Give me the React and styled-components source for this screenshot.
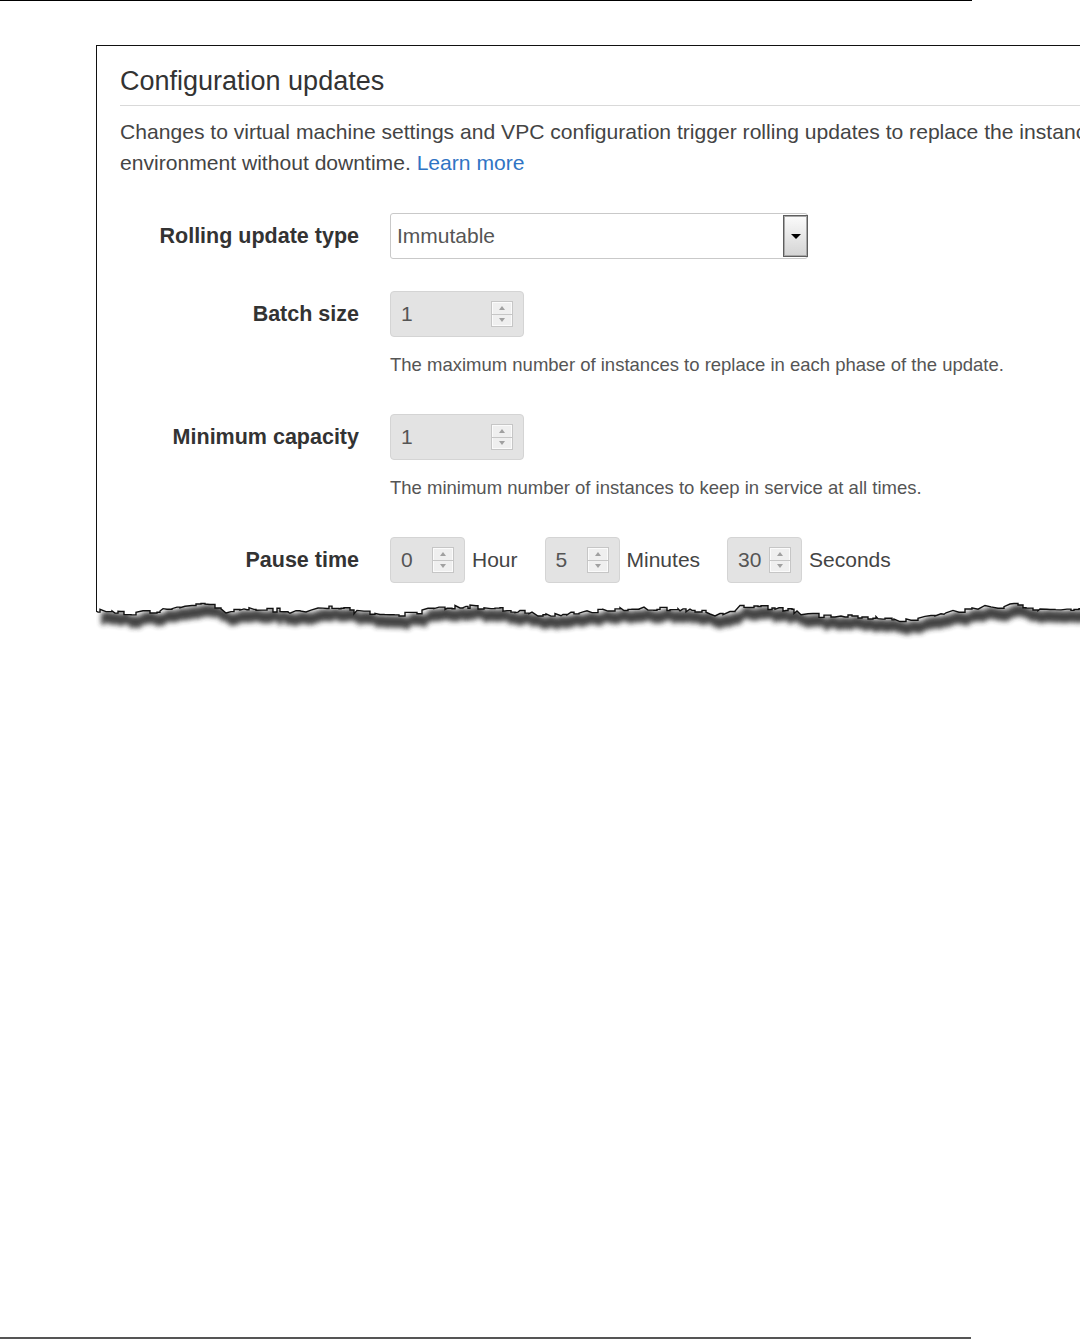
import React from "react";
import styled, { createGlobalStyle } from "styled-components";

const GlobalStyle = createGlobalStyle`
  html, body {
    margin: 0;
    padding: 0;
    background: #ffffff;
  }
  body {
    font-family: "Liberation Sans", Arial, Helvetica, sans-serif;
  }
`;

const Page = styled.div`
  width: 1080px;
  height: 1339px;
  display: flex;
  flex-direction: column;
  overflow: hidden;
  background: #ffffff;
`;

const Rule = styled.div`
  flex-shrink: 0;
  width: ${(p) => p.$width}px;
  height: ${(p) => p.$thick}px;
  background: ${(p) => p.$color};
`;

const Spacer = styled.div`
  flex: 1;
`;

const Figure = styled.div`
  margin: 44px 0 0 96px;
  width: 984px;
  overflow: hidden;
  flex-shrink: 0;
`;

const Panel = styled.section`
  width: 1180px;
  box-sizing: border-box;
  border-top: 1px solid #111;
  border-left: 1px solid #111;
  padding: 19px 0 17px 23px;
`;

const Title = styled.h2`
  margin: 0;
  padding-bottom: 8px;
  border-bottom: 1px solid #d9d9d9;
  font-size: 27px;
  font-weight: normal;
  line-height: 32px;
  color: #333;
`;

const Intro = styled.p`
  margin: 10px 0 0;
  width: 1140px;
  font-size: 21.1px;
  line-height: 31px;
  color: #444;
`;

const Link = styled.a`
  color: #2f74c4;
  text-decoration: none;
`;

const Form = styled.div`
  margin-top: 35px;
  display: flex;
  flex-direction: column;
  gap: 32px;
`;

const Row = styled.div`
  display: grid;
  grid-template-columns: 239px auto;
  column-gap: 31px;
  align-items: start;
`;

const Label = styled.div`
  text-align: right;
  font-size: 21.5px;
  font-weight: bold;
  line-height: 46px;
  color: #333;
  white-space: nowrap;
`;

const Field = styled.div`
  display: flex;
  flex-direction: ${(p) => (p.$inline ? "row" : "column")};
  align-items: ${(p) => (p.$inline ? "center" : "flex-start")};
`;

const Select = styled.div`
  width: 418px;
  height: 46px;
  box-sizing: border-box;
  border: 1px solid #c9c9c9;
  border-radius: 3px;
  background: #fff;
  display: flex;
  align-items: stretch;
  padding: 1px 0 1px 6px;
  font-size: 21px;
  color: #555;
`;

const SelectText = styled.span`
  flex: 1;
  display: flex;
  align-items: center;
`;

const SelectButton = styled.span`
  width: 25px;
  margin-right: -1px;
  box-sizing: border-box;
  border: 1px solid #5e5e5e;
  box-shadow: inset 0 0 0 1px #a8a8a8;
  background: linear-gradient(#fbfbfb, #d4d4d4);
  display: flex;
  align-items: center;
  justify-content: center;
`;

const Caret = styled.span`
  width: 0;
  height: 0;
  border-left: 5px solid transparent;
  border-right: 5px solid transparent;
  border-top: 5px solid #000;
`;

const NumberBox = styled.div`
  width: ${(p) => p.$width}px;
  height: 46px;
  box-sizing: border-box;
  border: 1px solid #d4d4d4;
  border-radius: 4px;
  background: #e3e3e3;
  display: flex;
  align-items: center;
  justify-content: space-between;
  padding: 0 10px 0 10px;
  font-size: 21px;
  color: #555;
  flex-shrink: 0;
`;

const Spinner = styled.span`
  width: 22px;
  height: 26px;
  box-sizing: border-box;
  border: 1px solid #c6c6c6;
  box-shadow: inset 0 0 0 1px #fbfbfb;
  background: #efefef;
  display: flex;
  flex-direction: column;
`;

const SpinHalf = styled.span`
  flex: 1;
  display: flex;
  align-items: center;
  justify-content: center;
  border-top: ${(p) => (p.$lower ? "1px solid #c6c6c6" : "none")};
`;

const SpinArrow = styled.span`
  width: 0;
  height: 0;
  border-left: 3.5px solid transparent;
  border-right: 3.5px solid transparent;
  ${(p) =>
    p.$dir === "up"
      ? "border-bottom: 4px solid #a0a0a0;"
      : "border-top: 4px solid #a0a0a0;"}
`;

const Help = styled.div`
  margin: 17px 0 6px;
  font-size: 18.5px;
  line-height: 22px;
  color: #555;
  white-space: nowrap;
`;

const Unit = styled.span`
  margin: 0 27px 0 7px;
  font-size: 21px;
  color: #444;
`;

const Edge = styled.svg`
  display: block;
`;

const KEYS = [
  [0, 11], [34, 13], [64, 10], [109, 5], [129, 11], [164, 9], [204, 12],
  [234, 7], [264, 13], [304, 14], [334, 10], [374, 6], [414, 11], [449, 16],
  [484, 11], [544, 9], [594, 10], [619, 15], [649, 6], [694, 11], [734, 17],
  [774, 17], [809, 20], [839, 16], [874, 9], [914, 5], [944, 9], [990, 11],
];

const jagPoints = () => {
  let seed = 12345;
  const rand = () => {
    seed = (seed * 16807) % 2147483647;
    return seed / 2147483647;
  };
  const pts = [[0, 11]];
  let x = 0;
  let y = 11;
  while (x < 990) {
    x += 2 + Math.round(rand() * 5);
    let i = 0;
    while (i < KEYS.length - 2 && KEYS[i + 1][0] < x) i++;
    const [x0, y0] = KEYS[i];
    const [x1, y1] = KEYS[i + 1];
    const t = Math.min(1, Math.max(0, (x - x0) / (x1 - x0)));
    const next = y0 + (y1 - y0) * t + Math.round((rand() - 0.5) * 4);
    if (rand() < 0.6) {
      pts.push([x, y]);
      pts.push([x, next]);
    } else {
      pts.push([x, next]);
    }
    y = next;
  }
  return pts;
};

const TornEdge = () => {
  const pts = jagPoints();
  const line = pts.map(([x, y]) => `${x},${y}`).join(" ");
  const shadowTop = pts.map(([x, y]) => `${x + 5},${y + 1}`);
  const shadowBottom = pts
    .slice()
    .reverse()
    .map(([x, y]) => `${x + 5},${y + 13}`);
  const cover = `0,0 ${line} 990,0`;
  return (
    <Edge width="984" height="44" viewBox="0 0 984 44">
      <defs>
        <filter id="tear-blur" x="-5%" y="-100%" width="110%" height="300%">
          <feGaussianBlur stdDeviation="2.4" />
        </filter>
      </defs>
      <polygon
        points={[...shadowTop, ...shadowBottom].join(" ")}
        fill="#2e2e2e"
        opacity="0.9"
        filter="url(#tear-blur)"
      />
      <polygon points={cover} fill="#fff" />
      <line x1="0.5" y1="0" x2="0.5" y2="11" stroke="#111" strokeWidth="1" />
      <polyline points={line} fill="none" stroke="#111" strokeWidth="1.4" />
    </Edge>
  );
};

const NumberInput = ({ value, width = 134 }) => (
  <NumberBox $width={width}>
    <span>{value}</span>
    <Spinner>
      <SpinHalf>
        <SpinArrow $dir="up" />
      </SpinHalf>
      <SpinHalf $lower>
        <SpinArrow $dir="down" />
      </SpinHalf>
    </Spinner>
  </NumberBox>
);

export default function App() {
  return (
    <Page>
      <GlobalStyle />
      <Rule $width={972} $thick={1} $color="#000" />
      <Figure>
        <Panel>
          <Title>Configuration updates</Title>
          <Intro>
            Changes to virtual machine settings and VPC configuration trigger
            rolling updates to replace the instances in your environment
            without downtime. <Link href="#">Learn more</Link>
          </Intro>
          <Form>
            <Row>
              <Label>Rolling update type</Label>
              <Field>
                <Select>
                  <SelectText>Immutable</SelectText>
                  <SelectButton>
                    <Caret />
                  </SelectButton>
                </Select>
              </Field>
            </Row>
            <Row>
              <Label>Batch size</Label>
              <Field>
                <NumberInput value="1" />
                <Help>
                  The maximum number of instances to replace in each phase of
                  the update.
                </Help>
              </Field>
            </Row>
            <Row>
              <Label>Minimum capacity</Label>
              <Field>
                <NumberInput value="1" />
                <Help>
                  The minimum number of instances to keep in service at all
                  times.
                </Help>
              </Field>
            </Row>
            <Row>
              <Label>Pause time</Label>
              <Field $inline>
                <NumberInput value="0" width={75} />
                <Unit>Hour</Unit>
                <NumberInput value="5" width={75} />
                <Unit>Minutes</Unit>
                <NumberInput value="30" width={75} />
                <Unit>Seconds</Unit>
              </Field>
            </Row>
          </Form>
        </Panel>
        <TornEdge />
      </Figure>
      <Spacer />
      <Rule $width={971} $thick={2} $color="#555" />
    </Page>
  );
}
